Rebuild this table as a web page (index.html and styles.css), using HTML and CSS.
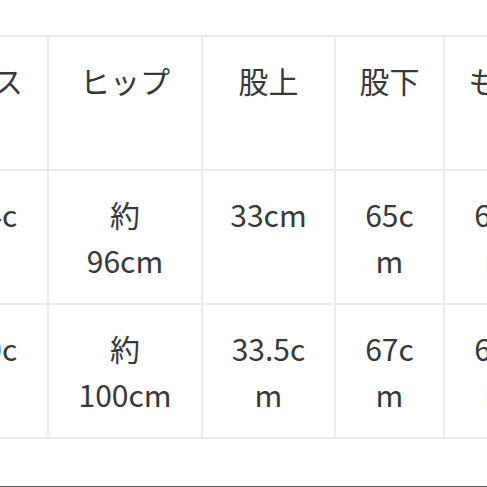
FILE: index.html
```html
<!DOCTYPE html>
<html lang="ja">
<head>
<meta charset="utf-8">
<link rel="stylesheet" href="styles.css">
</head>
<body>
<div class="scroller">
  <table class="size-table">
    <colgroup>
      <col class="c1"><col class="c2"><col class="c3"><col class="c4"><col class="c5">
    </colgroup>
    <tr>
      <td>ウエスト</td>
      <td>ヒップ</td>
      <td>股上</td>
      <td>股下</td>
      <td>もも</td>
    </tr>
    <tr>
      <td>約74cm</td>
      <td>約<br>96cm</td>
      <td>33cm</td>
      <td>65cm</td>
      <td>60cm</td>
    </tr>
    <tr>
      <td>約80cm</td>
      <td>約<br>100cm</td>
      <td>33.5cm</td>
      <td>67cm</td>
      <td>62cm</td>
    </tr>
  </table>
</div>
<div class="bottom-bar"></div>
</body>
</html>
```
FILE: styles.css
```css
html, body {
  margin: 0;
  padding: 0;
  background: #ffffff;
}
body {
  width: 487px;
  height: 487px;
  overflow: hidden;
  display: flex;
  flex-direction: column;
  font-family: "Noto Sans CJK JP", "Noto Sans", sans-serif;
  color: #383838;
}
.scroller {
  overflow: hidden;
  width: 487px;
  padding-top: 35px;
  flex: 1;
}
.size-table {
  border-collapse: collapse;
  table-layout: fixed;
  width: 645px;
  margin-left: -93px;
}
.c1 { width: 140px; }
.c2 { width: 154px; }
.c3 { width: 133px; }
.c4 { width: 109px; }
.c5 { width: 109px; }
.size-table td {
  border: 2px solid #ebebeb;
  padding: 20px 20px;
  font-size: 30px;
  line-height: 46px;
  text-align: center;
  vertical-align: top;
  word-break: break-all;
  height: 92px;
}
.bottom-bar {
  height: 1px;
  background: #5a5a5a;
  flex-shrink: 0;
}
```
